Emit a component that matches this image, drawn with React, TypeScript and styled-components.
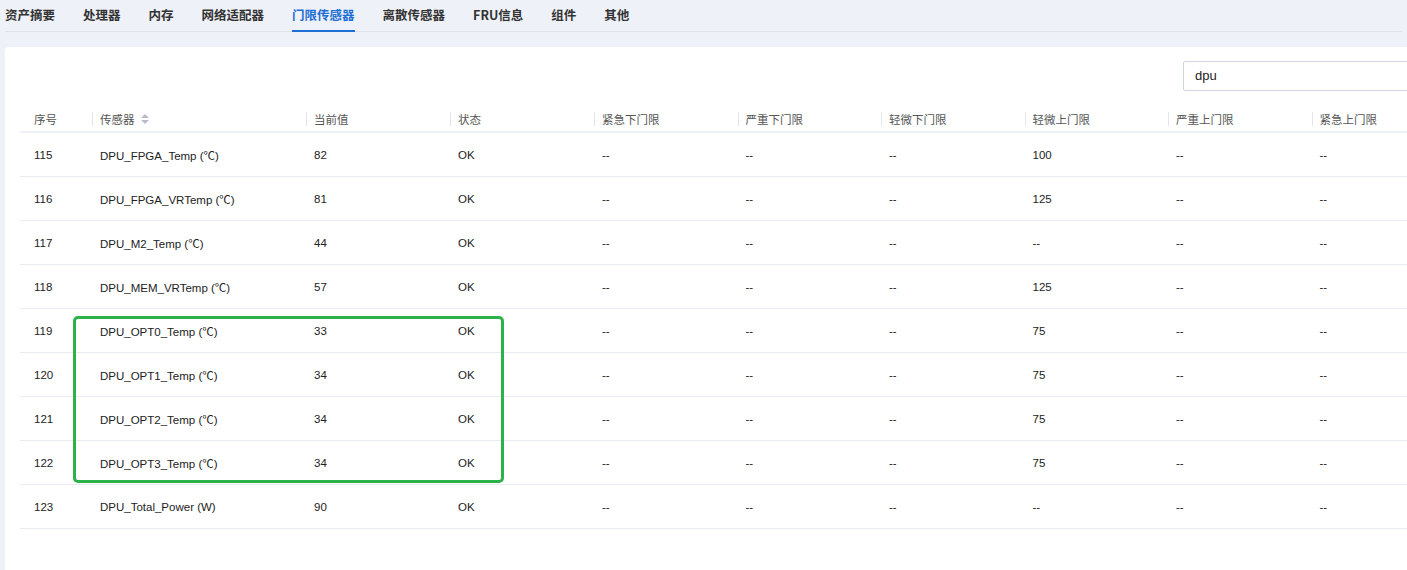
import React from "react";
import styled, { createGlobalStyle } from "styled-components";

const Global = createGlobalStyle`
  html, body { margin: 0; padding: 0; background: #eef1f7; overflow: hidden; }
  body { font-family: "Noto Sans CJK SC", "Liberation Sans", sans-serif; }
`;

const Page = styled.div`width: 1407px; height: 570px; position: relative; overflow: hidden;`;
const Tabs = styled.div`
  display: flex; gap: 28px; height: 31px; margin-left: 5px; margin-right: 5px;
  border-bottom: 1px solid #dde2ea; align-items: stretch;
`;
const Tab = styled.div<{ $active?: boolean }>`
  font-size: 12.5px; font-weight: 600; color: ${p => (p.$active ? "#1d6fd6" : "#333")};
  display: flex; align-items: center; padding-bottom: 2px;
  border-bottom: 2px solid ${p => (p.$active ? "#1d6fd6" : "transparent")};
  margin-bottom: -1px;
`;
const Card = styled.div`
  position: absolute; left: 5px; top: 47px; width: 1450px; height: 560px; background: #fff;
  border-radius: 4px 0 0 0;
`;
const Toolbar = styled.div`height: 60px; position: relative;`;
const Search = styled.div`
  position: absolute; left: 1178px; top: 14px; width: 300px; height: 30px; box-sizing: border-box;
  border: 1px solid #cfd6e2; border-radius: 2px; font-family: "Liberation Sans", sans-serif;
  font-size: 13px; color: #222; padding: 6px 11px;
`;
const Table = styled.div`margin-left: 15px;`;
const Grid = styled.div<{ $head?: boolean }>`
  display: grid; grid-template-columns: 72px 214px 144px 144px repeat(6, 143.5px);
  height: ${p => (p.$head ? "24px" : "43px")}; align-items: center;
  border-bottom: ${p => (p.$head ? "2px solid #eef1f5" : "1px solid #e8ebf0")};
`;
const Th = styled.div<{ $sep?: boolean }>`
  font-size: 11.5px; color: #555; padding-left: ${p => (p.$sep ? "7px" : "14px")};
  border-left: ${p => (p.$sep ? "1px solid #e3e6eb" : "none")}; line-height: 14px;
  display: flex; align-items: center; gap: 6px;
`;
const Td = styled.div`
  font-size: 11.5px; color: #222; padding-left: 8px;
  font-family: "Liberation Sans", "Noto Sans CJK SC", sans-serif;
  &:first-child { padding-left: 14px; }
`;
const Highlight = styled.div`
  position: absolute; left: 73px; top: 316px; width: 431px; height: 167px; box-sizing: border-box;
  border: 3px solid #2bb34a; border-radius: 5px;
`;

const heads = ["序号", "传感器", "当前值", "状态", "紧急下门限", "严重下门限", "轻微下门限", "轻微上门限", "严重上门限", "紧急上门限"];
const rows: [string, string, string, string][] = [
  ["115", "DPU_FPGA_Temp (℃)", "82", "100"],
  ["116", "DPU_FPGA_VRTemp (℃)", "81", "125"],
  ["117", "DPU_M2_Temp (℃)", "44", "--"],
  ["118", "DPU_MEM_VRTemp (℃)", "57", "125"],
  ["119", "DPU_OPT0_Temp (℃)", "33", "75"],
  ["120", "DPU_OPT1_Temp (℃)", "34", "75"],
  ["121", "DPU_OPT2_Temp (℃)", "34", "75"],
  ["122", "DPU_OPT3_Temp (℃)", "34", "75"],
  ["123", "DPU_Total_Power (W)", "90", "--"],
];

const Sort = () => (
  <svg width="8" height="10" viewBox="0 0 8 10"><path d="M4 0L8 4H0z" fill="#b8bec8" /><path d="M4 10L8 6H0z" fill="#b8bec8" /></svg>
);

export default function App() {
  return (
    <Page>
      <Global />
      <Tabs>
        {["资产摘要", "处理器", "内存", "网络适配器", "门限传感器", "离散传感器", "FRU信息", "组件", "其他"].map(t => (
          <Tab key={t} $active={t === "门限传感器"}>{t}</Tab>
        ))}
      </Tabs>
      <Card>
        <Toolbar><Search>dpu</Search></Toolbar>
        <Table>
          <Grid $head>
            {heads.map((h, i) => (
              <Th key={h} $sep={i > 0}>{h}{i === 1 && <Sort />}</Th>
            ))}
          </Grid>
          {rows.map(r => (
            <Grid key={r[0]}>
              <Td>{r[0]}</Td><Td>{r[1]}</Td><Td>{r[2]}</Td><Td>OK</Td>
              <Td>--</Td><Td>--</Td><Td>--</Td><Td>{r[3]}</Td><Td>--</Td><Td>--</Td>
            </Grid>
          ))}
        </Table>
      </Card>
      <Highlight />
    </Page>
  );
}
